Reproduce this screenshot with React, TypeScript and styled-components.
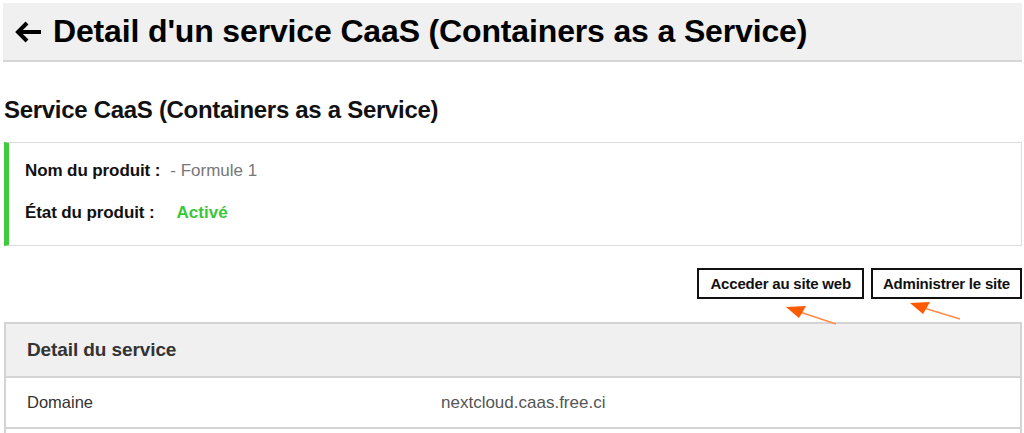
import { createGlobalStyle, styled } from 'styled-components';

const GlobalStyle = createGlobalStyle`
  * { box-sizing: border-box; }
  body {
    margin: 0;
    background: #fff;
    font-family: 'Liberation Sans', Arial, sans-serif;
    color: #111;
  }
`;

const rows = [{ label: 'Domaine', value: 'nextcloud.caas.free.ci' }, { label: '', value: '' }];

const App = () => (
  <>
    <GlobalStyle />
    <Page>
      <Header>
        <BackIcon viewBox="0 0 28 24" aria-hidden>
          <path d="M27 12H5M13 3l-9 9 9 9" fill="none" stroke="#000" strokeWidth="4" strokeLinecap="butt" strokeLinejoin="miter" />
        </BackIcon>
        <Title>Detail d'un service CaaS (Containers as a Service)</Title>
      </Header>

      <Subtitle>Service CaaS (Containers as a Service)</Subtitle>

      <ProductCard>
        <InfoRow>
          <Label>Nom du produit :</Label>
          <Value>- Formule 1</Value>
        </InfoRow>
        <InfoRow>
          <Label>État du produit :</Label>
          <Status>Activé</Status>
        </InfoRow>
      </ProductCard>

      <Actions>
        <ActionButton $wide>Acceder au site web</ActionButton>
        <ActionButton>Administrer le site</ActionButton>
      </Actions>

      <Table>
        <thead>
          <tr>
            <HeadCell colSpan={2}>Detail du service</HeadCell>
          </tr>
        </thead>
        <tbody>
          {rows.map((r, i) => (
            <tr key={i}>
              <KeyCell>{r.label}</KeyCell>
              <ValCell>{r.value}</ValCell>
            </tr>
          ))}
        </tbody>
      </Table>

      <Annotations viewBox="0 0 1024 433" aria-hidden>
        <line x1="836" y1="324" x2="800" y2="312" stroke="#ff8a4c" strokeWidth="1.5" />
        <polygon points="786,307 806,306 799,318" fill="#ff5a00" />
        <line x1="960" y1="319" x2="924" y2="308" stroke="#ff8a4c" strokeWidth="1.5" />
        <polygon points="910,303 930,302 923,314" fill="#ff5a00" />
      </Annotations>
    </Page>
  </>
);

export default App;

const Page = styled.div`
  position: relative;
  width: 1024px;
  height: 433px;
  overflow: hidden;
  padding: 3px 2px 0 4px;
`;

const Header = styled.div`
  display: flex;
  align-items: center;
  gap: 11px;
  height: 59px;
  margin-left: -1px;
  padding-left: 11px;
  background: #f0f0f0;
  border-bottom: 2px solid #d6d6d6;
`;

const BackIcon = styled.svg`
  width: 28px;
  height: 24px;
  flex: none;
`;

const Title = styled.h1`
  margin: 0;
  font-size: 32px;
  font-weight: 700;
  color: #000;
  letter-spacing: -0.15px;
`;

const Subtitle = styled.h2`
  margin: 34px 0 18px;
  font-size: 24px;
  font-weight: 700;
  color: #111;
  letter-spacing: -0.3px;
`;

const ProductCard = styled.div`
  display: flex;
  flex-direction: column;
  gap: 22px;
  height: 104px;
  padding: 18px 0 0 16px;
  border: 1px solid #dcdcdc;
  border-left: 5px solid #3ecb3e;
`;

const InfoRow = styled.div`
  display: flex;
  align-items: center;
  gap: 10px;
`;

const Label = styled.span`
  font-size: 17px;
  font-weight: 700;
  color: #111;
  letter-spacing: -0.1px;
`;

const Value = styled.span`
  font-size: 17px;
  color: #777;
`;

const Status = styled.span`
  margin-left: 12px;
  font-size: 17px;
  font-weight: 700;
  color: #38c738;
`;

const Actions = styled.div`
  display: flex;
  justify-content: flex-end;
  gap: 7px;
  margin-top: 22px;
`;

const ActionButton = styled.button<{ $wide?: boolean }>`
  height: 31px;
  padding: 0 ${(p) => (p.$wide ? 11 : 10)}px;
  border: 2px solid #111;
  background: #fff;
  font-family: 'Liberation Sans', Arial, sans-serif;
  font-size: 15px;
  font-weight: 700;
  color: #111;
  letter-spacing: -0.2px;
`;

const Table = styled.table`
  width: 100%;
  margin-top: 23px;
  border-collapse: collapse;
  border: 2px solid #d4d4d4;
`;

const HeadCell = styled.th`
  height: 54px;
  padding: 0 0 0 21px;
  background: #f0f0f0;
  border: 2px solid #d4d4d4;
  text-align: left;
  font-size: 19px;
  font-weight: 700;
  color: #333;
  letter-spacing: -0.1px;
`;

const KeyCell = styled.td`
  width: 435px;
  height: 51px;
  padding: 0 0 0 21px;
  border-top: 2px solid #d4d4d4;
  font-size: 16.5px;
  color: #333;
`;

const ValCell = styled.td`
  height: 51px;
  border-top: 2px solid #d4d4d4;
  font-size: 17px;
  color: #555;
`;

const Annotations = styled.svg`
  position: absolute;
  inset: 0;
  width: 1024px;
  height: 433px;
  pointer-events: none;
`;
